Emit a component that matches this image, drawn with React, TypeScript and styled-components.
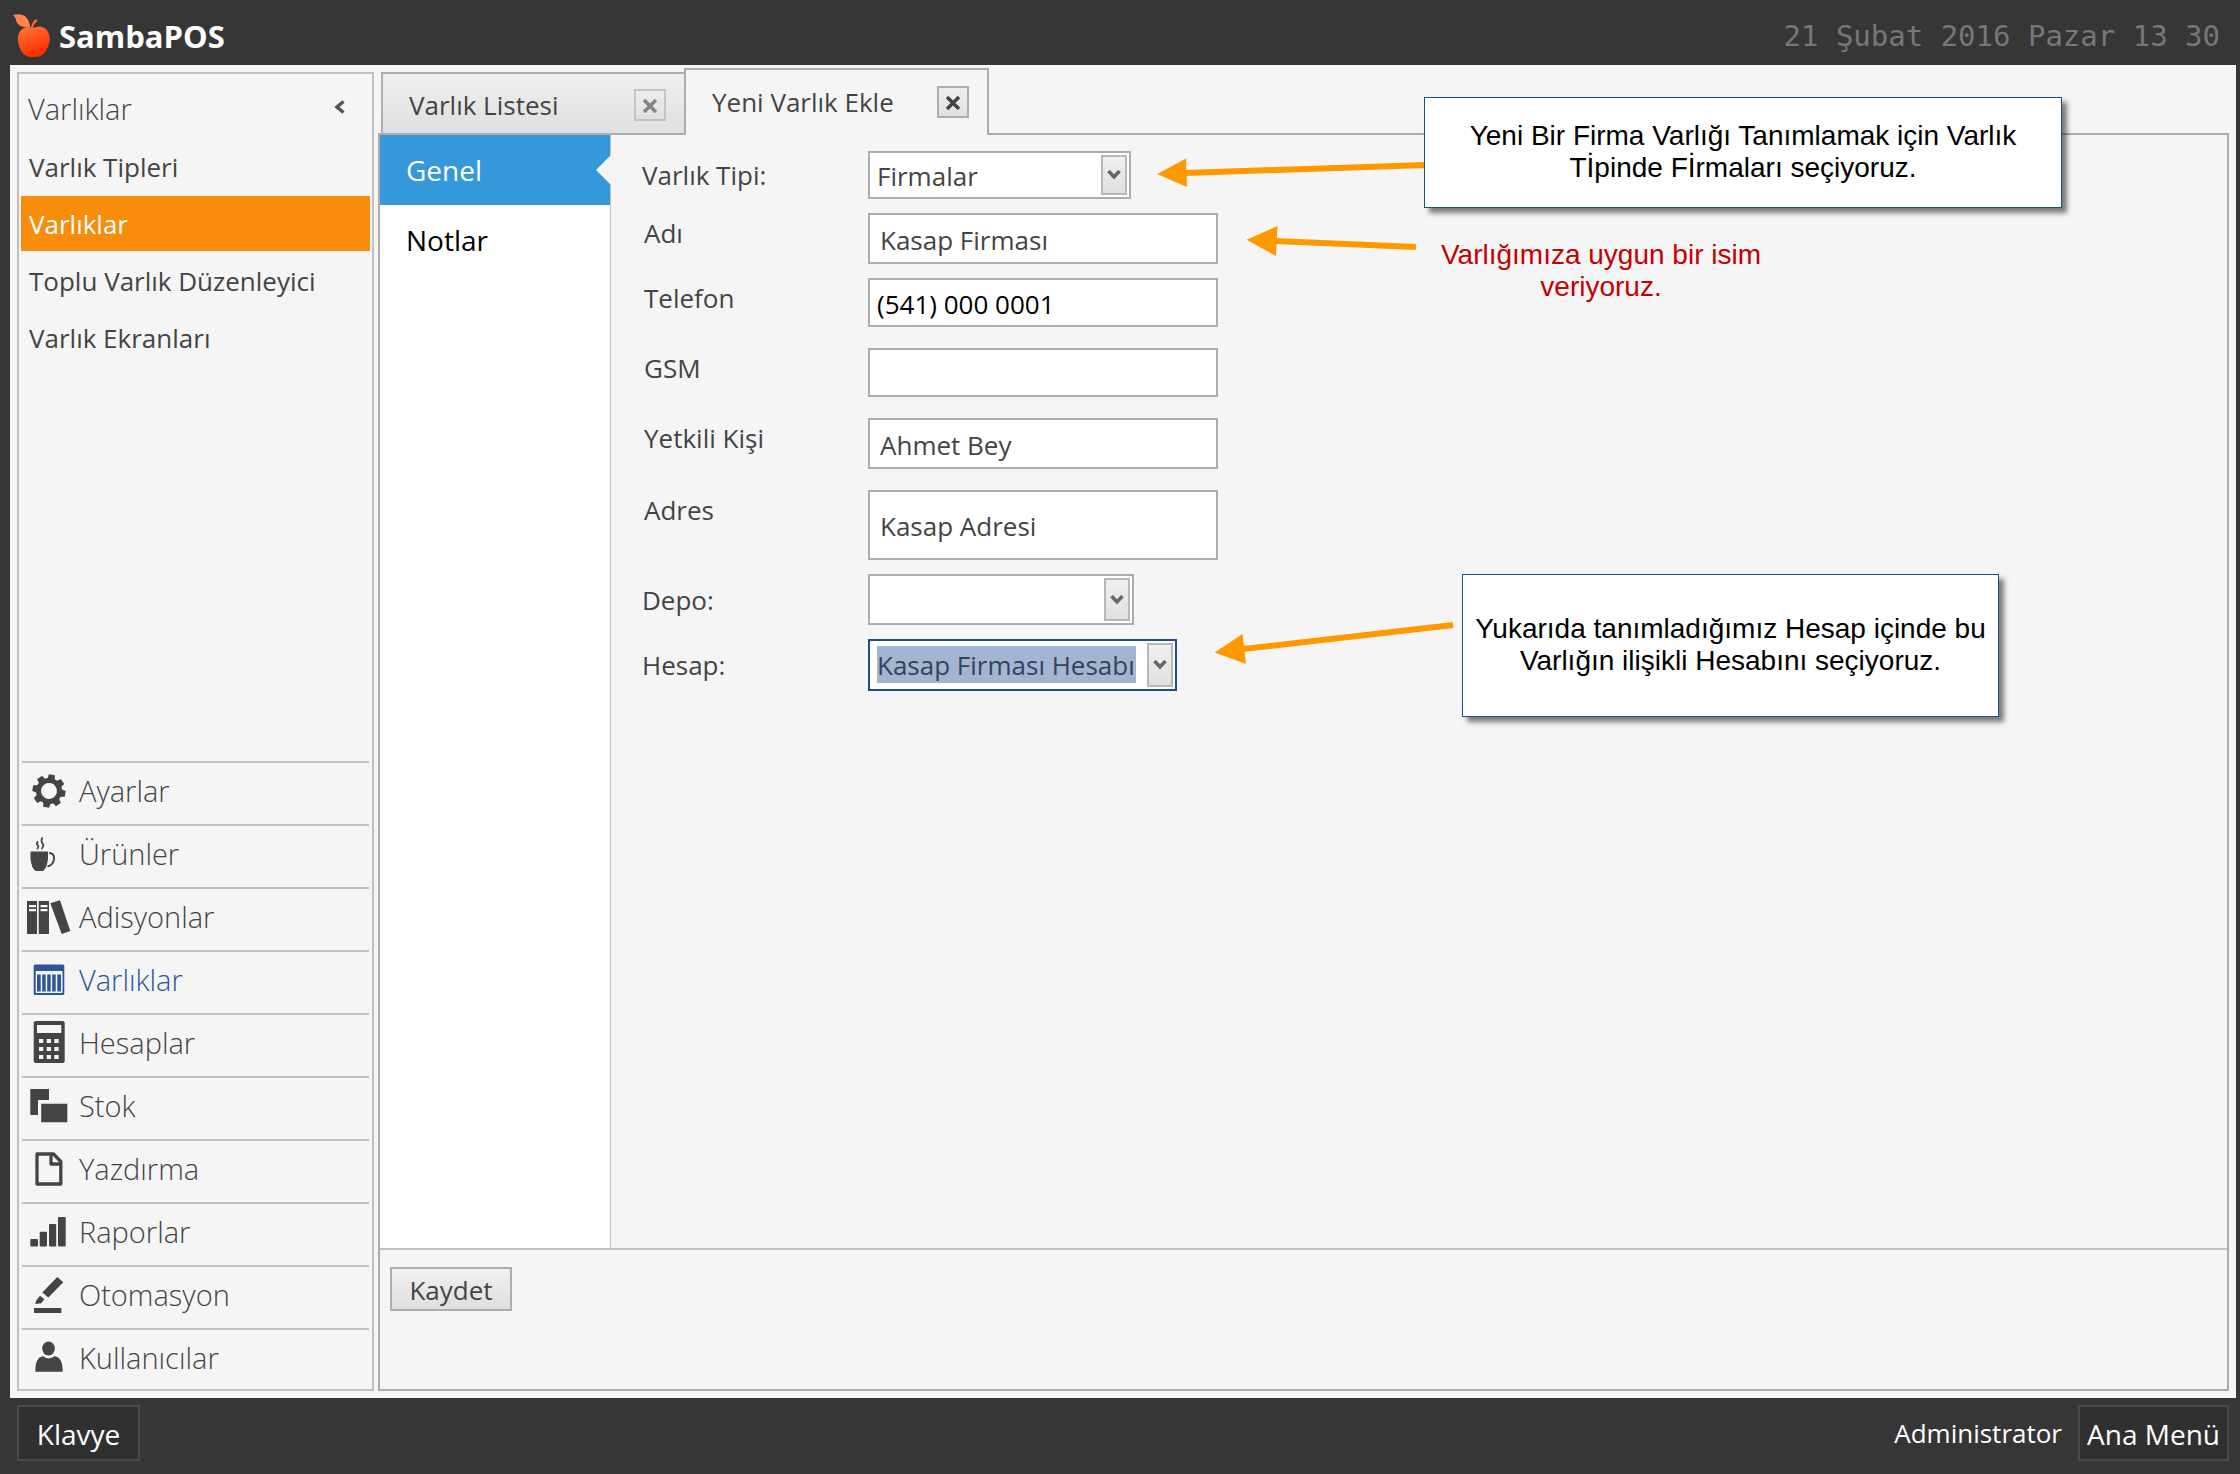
import React, { useState } from "react";
import styled, { createGlobalStyle, css } from "styled-components";

const ui = `"Open Sans", "Noto Sans", sans-serif`;
const line = "#c0c0c0";
const frame = "#adadad";
const ink = "#444444";
const dark = "#363636";
const surface = "#f5f5f5";
const annotation = "#ff9900";

const GlobalStyle = createGlobalStyle`
  *, *::before, *::after { box-sizing: border-box; }
  body { margin: 0; background: ${dark}; font-family: ${ui}; font-size: 26px; line-height: 36px; color: ${ink}; }
  button, input, select { font: inherit; color: inherit; margin: 0; }
  button { cursor: pointer; }
`;

const Shell = styled.div`
  display: flex;
  flex-direction: column;
  min-height: 100vh;
  background: ${dark};
`;

const Header = styled.header`
  display: flex;
  align-items: center;
  justify-content: space-between;
  height: 65px;
  padding: 6px 20px 0 13px;
`;

const Brand = styled.div`
  display: flex;
  align-items: center;
  gap: 8px;
  color: #fff;
  font-size: 31px;
  font-weight: 700;
`;

const Clock = styled.time`
  font-family: "DejaVu Sans Mono", monospace;
  font-size: 29px;
  color: #777;
`;

const Main = styled.main`
  flex: 1;
  display: grid;
  grid-template-columns: 357px minmax(0, 1fr);
  gap: 4px;
  margin: 0 4px 0 10px;
  padding: 3px 7px 7px;
  background: ${surface};
`;

const Sidebar = styled.aside`
  display: flex;
  flex-direction: column;
  justify-content: space-between;
  margin-top: 4px;
  padding: 0 2px;
  border: 2px solid ${line};
`;

const SidebarHead = styled.div`
  display: flex;
  align-items: center;
  justify-content: space-between;
  height: 65px;
  padding: 4px 25px 0 7px;
`;

const SidebarTitle = styled.h2`
  margin: 0;
  font-size: 29px;
  font-weight: 300;
`;

const CollapseButton = styled.button`
  display: flex;
  padding: 0 0 4px;
  border: 0;
  background: none;
`;

const List = styled.ul`
  display: flex;
  flex-direction: column;
  gap: 2px;
  margin: 0;
  padding: 0;
  list-style: none;
`;

const LinkButton = styled.button<{ $active?: boolean }>`
  display: block;
  width: 100%;
  height: 55px;
  padding: 0 8px;
  border: 0;
  text-align: left;
  white-space: nowrap;
  background: ${(p) => (p.$active ? "#f88c0b" : "transparent")};
  color: ${(p) => (p.$active ? "#fff" : ink)};
`;

const ModuleList = styled.ul`
  margin: 0;
  padding: 0 1px;
  list-style: none;
`;

const ModuleButton = styled.button<{ $active?: boolean }>`
  display: flex;
  align-items: flex-start;
  gap: 6px;
  width: 100%;
  height: 61px;
  padding: 7px 0 0 3px;
  border: 0;
  background: none;
  font-size: 29px;
  font-weight: 300;
  line-height: 42px;
  color: ${(p) => (p.$active ? "#2b579a" : ink)};
`;

const ModuleItem = styled.li`
  border-top: 2px solid ${line};

  &:last-child ${ModuleButton} {
    height: 59px;
  }
`;

const ModuleIcon = styled.svg`
  width: 48px;
  height: 48px;
  overflow: visible;
  fill: currentColor;
`;

const Workspace = styled.section`
  position: relative;
  display: flex;
  flex-direction: column;
`;

const TabStrip = styled.div`
  display: flex;
  align-items: flex-end;
  height: 65px;
  padding-left: 3px;
`;

const Tab = styled.div<{ $active?: boolean }>`
  display: flex;
  align-items: center;
  justify-content: space-between;
  border: 2px solid ${frame};
  border-bottom: 0;
  ${(p) =>
    p.$active
      ? css`
          position: relative;
          z-index: 1;
          width: 305px;
          height: 67px;
          margin: 0 0 -2px -2px;
          padding: 0 18px 2px 26px;
          background: ${surface};
        `
      : css`
          width: 305px;
          height: 61px;
          padding: 2px 18px 0 26px;
          background: linear-gradient(#efefef, #e0e0e0);
        `}
`;

const TabLabel = styled.button`
  padding: 0;
  border: 0;
  background: none;
  white-space: nowrap;
`;

const CloseButton = styled.button<{ $muted?: boolean }>`
  display: grid;
  place-items: center;
  width: 32px;
  height: 32px;
  padding: 2px 0 0;
  border: 2px solid ${frame};
  background: linear-gradient(#efefef, #e0e0e0);
  opacity: ${(p) => (p.$muted ? 0.6 : 1)};
`;

const Panel = styled.div`
  flex: 1;
  display: flex;
  flex-direction: column;
  border: 2px solid ${frame};
`;

const PanelBody = styled.div`
  flex: 1;
  display: grid;
  grid-template-columns: 231px minmax(0, 1fr);
`;

const SectionNav = styled.nav`
  border-right: 1px solid ${line};
  background: #fff;
`;

const SectionButton = styled.button<{ $active?: boolean }>`
  display: block;
  position: relative;
  width: 100%;
  height: 70px;
  padding: 0 26px;
  border: 0;
  text-align: left;
  font-size: 28px;
  background: ${(p) => (p.$active ? "#3498db" : "transparent")};
  color: ${(p) => (p.$active ? "#fff" : "#000")};

  ${(p) =>
    p.$active &&
    css`
      &::after {
        content: "";
        position: absolute;
        top: 20px;
        right: -1px;
        width: 15px;
        height: 30px;
        background: ${surface};
        clip-path: polygon(100% 0, 0 50%, 100% 100%);
      }
    `}
`;

const Form = styled.form`
  display: flex;
  flex-direction: column;
  align-items: flex-start;
  gap: 14px;
  padding: 16px 0 0 31px;
`;

const FieldGroup = styled.div`
  display: flex;
  flex-direction: column;
  gap: 21px;
`;

const Field = styled.div<{ $combo?: boolean }>`
  display: grid;
  grid-template-columns: 226px auto;
  align-items: ${(p) => (p.$combo ? "center" : "start")};
`;

const Label = styled.label<{ $combo?: boolean }>`
  padding: ${(p) => (p.$combo ? "0" : "2px 0 0 2px")};
`;

const TextBox = styled.input<{ $height: number; $plain?: boolean }>`
  width: 350px;
  height: ${(p) => p.$height}px;
  padding: ${(p) => (p.$plain ? "2px 7px 0" : "2px 10px 0")};
  border: 2px solid ${frame};
  border-radius: 0;
  outline: 0;
  background: #fff;
  color: ${(p) => (p.$plain ? "#000" : ink)};
`;

const Combo = styled.div<{ $width: number; $height: number; $focused?: boolean }>`
  position: relative;
  width: ${(p) => p.$width}px;
  height: ${(p) => p.$height}px;
  border: 2px solid ${(p) => (p.$focused ? "#1f4e8f" : frame)};
  background: #fff;
`;

const Select = styled.select<{ $focused?: boolean }>`
  display: block;
  width: 100%;
  height: 100%;
  padding: 5px 39px 6px 7px;
  border: 0;
  border-radius: 0;
  outline: 0;
  appearance: none;
  background-color: ${(p) => (p.$focused ? "#a4b5d1" : "#fff")};
  background-clip: content-box;
  color: ${(p) => (p.$focused ? "#34435c" : ink)};
`;

const ComboArrow = styled.span`
  position: absolute;
  top: 2px;
  right: 2px;
  bottom: 2px;
  display: grid;
  place-items: center;
  width: 26px;
  border: 2px solid #b8b8b8;
  background: linear-gradient(#f0f0f0, #e0e0e0);
  pointer-events: none;
`;

const PanelFooter = styled.div`
  height: 141px;
  padding: 17px 10px;
  border-top: 2px solid ${line};
`;

const SaveButton = styled.button`
  height: 44px;
  width: 122px;
  padding: 2px 0 0;
  border: 2px solid ${frame};
  background: linear-gradient(#f1f1f1, #dfdfdf);
`;

const Footer = styled.footer`
  display: flex;
  align-items: center;
  justify-content: space-between;
  height: 76px;
  padding: 0 11px 6px 17px;
  color: #fff;
`;

const UserArea = styled.div`
  display: flex;
  align-items: center;
  gap: 16px;
`;

const FooterButton = styled.button<{ $width: number }>`
  width: ${(p) => p.$width}px;
  height: 56px;
  padding: 2px 0 0;
  border: 2px solid #4a4a4a;
  background: #303030;
  font-size: 28px;
  white-space: nowrap;
`;

const Annotations = styled.div`
  position: absolute;
  inset: 0;
  z-index: 2;
  pointer-events: none;
  font-family: "Liberation Sans", Arial, sans-serif;
  font-size: 28px;
  line-height: 32px;
  text-align: center;
`;

const Arrows = styled.svg`
  position: absolute;
  top: 0;
  left: 0;
  width: 1120px;
  height: 660px;
  fill: ${annotation};
  stroke: ${annotation};
`;

const Note = styled.p<{ $x: number; $y: number; $w: number; $h: number; $boxed?: boolean }>`
  position: absolute;
  left: ${(p) => p.$x}px;
  top: ${(p) => p.$y}px;
  width: ${(p) => p.$w}px;
  height: ${(p) => p.$h}px;
  display: grid;
  place-items: center;
  margin: 0;
  color: #c40000;
  ${(p) =>
    p.$boxed &&
    css`
      padding-bottom: 2px;
      border: 1px solid #1c4f8c;
      background: #fff;
      color: #000;
      box-shadow: 5px 5px 5px rgba(0, 0, 0, 0.5);
    `}
`;

const gearTeeth = [0, 45, 90, 135, 180, 225, 270, 315];

const icons: Record<string, React.ReactNode> = {
  gear: (
    <g transform="rotate(10 24 21)">
      <circle cx="24" cy="21" r="10.5" fill="none" stroke="currentColor" strokeWidth="5" />
      {gearTeeth.map((a) => (
        <path key={a} d="M20.2 9.5 L21 4.5 H27 L27.8 9.5 Z" transform={`rotate(${a} 24 21)`} />
      ))}
    </g>
  ),
  cup: (
    <>
      <path d="M5.5 18.5 H23 V26 Q22 35 18 38 H10.5 Q6.5 35 5.5 26 Z" />
      <path d="M24 20 Q29.500 20 29 26 Q28.500 32 22.500 33.500" fill="none" stroke="currentColor" strokeWidth="2" />
      <path d="M12 16 Q14.500 13.500 12.500 12 Q11 10.500 13 8.500 M16.500 16 Q19.500 12.500 17.500 10.500 Q15.500 8 17.500 4.500" fill="none" stroke="currentColor" strokeWidth="1.8" />
    </>
  ),
  books: (
    <>
      <path fillRule="evenodd" d="M2 5 H12 V38 H2 Z M4 9 V11.300 H11 V9 Z M4 13 V15.200 H11 V13 Z" />
      <path fillRule="evenodd" d="M13.700 5 H24 V38 H13.700 Z M15.500 9 V11.300 H22.500 V9 Z M15.500 13 V15.200 H22.500 V13 Z" />
      <path d="M25.300 7.300 L35 4.300 L45.300 35 L36.700 38 Z" />
    </>
  ),
  calendar: (
    <>
      <path fillRule="evenodd" d="M10 5.500 H38 Q39.300 5.500 39.300 7 V34.500 Q39.300 36 38 36 H10 Q8.700 36 8.700 34.500 V7 Q8.700 5.500 10 5.500 Z M10.700 12 V34 H37.500 V12 Z" />
      <path d="M12 15.500 H15.700 V32.500 H12 Z M17.200 15.500 H20.700 V32.500 H17.200 Z M22.200 15.500 H25.700 V32.500 H22.200 Z M27.200 15.500 H30.700 V32.500 H27.200 Z M32.300 15.500 H36 V32.500 H32.300 Z" />
    </>
  ),
  calculator: (
    <path
      fillRule="evenodd"
      d="M11 -1 H37.500 Q39.700 -1 39.700 1 V39 Q39.700 41 37.500 41 H11 Q8.700 41 8.700 39 V1 Q8.700 -1 11 -1 Z M12 3 V11 H36.300 V3 Z M14 17 V21 H18.300 V17 Z M21.700 17 V21 H26 V17 Z M29.300 17 V21 H33.700 V17 Z M14 25 V29 H18.300 V25 Z M21.700 25 V29 H26 V25 Z M29.300 25 V29 H33.700 V25 Z M14 33 V37 H18.300 V33 Z M21.700 33 V37 H26 V33 Z M29.300 33 V37 H33.700 V33 Z"
    />
  ),
  stock: <path d="M5.300 4 H24 V15 H13 V30 H5.300 Z M16.200 18.700 H42.300 V37.300 H16.200 Z" />,
  page: (
    <path d="M12 6 H28.500 L35.800 13.500 V36 H12 Z M26 6 V16 H35.800" fill="none" stroke="currentColor" strokeWidth="3.300" strokeLinejoin="round" />
  ),
  bars: (
    <>
      <rect x="5.300" y="28" width="7.700" height="7.500" rx="1" />
      <rect x="14.700" y="20.700" width="7.300" height="14.800" rx="1" />
      <rect x="24" y="13" width="7.200" height="22.500" rx="1" />
      <rect x="33" y="6" width="7.700" height="29.500" rx="1" />
    </>
  ),
  pencil: (
    <path d="M9 34 H36.300 V39 H9 Z M32.300 3 L38.300 8.300 L23.300 23.500 L17.300 18.500 Z M15 21.700 L19.300 25.300 L16.300 29.300 L10.300 30 L11 26.700 Z" />
  ),
  user: (
    <>
      <ellipse cx="23.500" cy="11.500" rx="6.300" ry="7" />
      <path d="M10.300 34.700 Q10.300 20 18 19.300 Q23.500 23.500 29.500 19.300 Q37.700 20 37.700 34.700 Z" />
    </>
  ),
};

const links = ["Varlık Tipleri", "Varlıklar", "Toplu Varlık Düzenleyici", "Varlık Ekranları"];

const modules = [
  { name: "Ayarlar", icon: "gear" },
  { name: "Ürünler", icon: "cup" },
  { name: "Adisyonlar", icon: "books" },
  { name: "Varlıklar", icon: "calendar" },
  { name: "Hesaplar", icon: "calculator" },
  { name: "Stok", icon: "stock" },
  { name: "Yazdırma", icon: "page" },
  { name: "Raporlar", icon: "bars" },
  { name: "Otomasyon", icon: "pencil" },
  { name: "Kullanıcılar", icon: "user" },
];

function AppleLogo() {
  return (
    <svg width="38" height="44" viewBox="0 0 38 44" aria-hidden="true">
      <defs>
        <linearGradient id="apple" x1="0" y1="0" x2="0.4" y2="1">
          <stop offset="0" stopColor="#ff7a3c" />
          <stop offset="1" stopColor="#ff2e00" />
        </linearGradient>
      </defs>
      <path d="M0 1 Q9 -1 13 3 Q17 8 17 13 Q9 14 5 10 Q3 8 2.500 4 Z" fill="#ff8548" />
      <path d="M18 14 Q19 7 23.500 5 L24.500 7 Q20.500 10 20 14 Z" fill="#ff6a35" />
      <path d="M20 14 Q28 10 34 16 Q39 24 35 33 Q31 43 22 43 H18 Q9 42 6 32 Q3 22 8 16 Q13 11 20 14 Z" fill="url(#apple)" />
    </svg>
  );
}

function Cross() {
  return (
    <svg width="16" height="14" viewBox="0 0 16 14" aria-hidden="true">
      <path d="M2 1 L14 13 M14 1 L2 13" stroke="#444" strokeWidth="3.500" />
    </svg>
  );
}

function ChevronDown() {
  return (
    <svg width="14" height="10" viewBox="0 0 14 10" aria-hidden="true">
      <path d="M1.500 1 L7 7 L12.500 1" fill="none" stroke="#666" strokeWidth="3.500" />
    </svg>
  );
}

function TextField({ id, label, value = "", height, plain }: { id: string; label: string; value?: string; height: number; plain?: boolean }) {
  return (
    <Field>
      <Label htmlFor={id}>{label}</Label>
      <TextBox id={id} type="text" defaultValue={value} $height={height} $plain={plain} />
    </Field>
  );
}

function ComboField({ id, label, value, width, height, focused }: { id: string; label: string; value: string; width: number; height: number; focused?: boolean }) {
  return (
    <Field $combo>
      <Label $combo htmlFor={id}>{label}</Label>
      <Combo $width={width} $height={height} $focused={focused}>
        <Select id={id} defaultValue={value} $focused={focused}>
          <option value={value}>{value}</option>
        </Select>
        <ComboArrow><ChevronDown /></ComboArrow>
      </Combo>
    </Field>
  );
}

export default function App() {
  const [link, setLink] = useState("Varlıklar");
  const [section, setSection] = useState("Genel");

  return (
    <Shell>
      <GlobalStyle />
      <Header>
        <Brand>
          <AppleLogo />
          SambaPOS
        </Brand>
        <Clock dateTime="2016-02-21T13:30">21 Şubat 2016 Pazar 13 30</Clock>
      </Header>

      <Main>
        <Sidebar>
          <div>
            <SidebarHead>
              <SidebarTitle>Varlıklar</SidebarTitle>
              <CollapseButton aria-label="Daralt">
                <svg width="11" height="14" viewBox="0 0 11 14" aria-hidden="true">
                  <path d="M9.500 1.500 L3 7 L9.500 12.500" fill="none" stroke="#555" strokeWidth="3.500" />
                </svg>
              </CollapseButton>
            </SidebarHead>
            <List>
              {links.map((name) => (
                <li key={name}>
                  <LinkButton $active={name === link} onClick={() => setLink(name)}>{name}</LinkButton>
                </li>
              ))}
            </List>
          </div>
          <ModuleList>
            {modules.map((m) => (
              <ModuleItem key={m.name}>
                <ModuleButton $active={m.name === "Varlıklar"}>
                  <ModuleIcon viewBox="0 0 48 48" aria-hidden="true">{icons[m.icon]}</ModuleIcon>
                  {m.name}
                </ModuleButton>
              </ModuleItem>
            ))}
          </ModuleList>
        </Sidebar>

        <Workspace>
          <TabStrip>
            <Tab>
              <TabLabel>Varlık Listesi</TabLabel>
              <CloseButton $muted aria-label="Kapat"><Cross /></CloseButton>
            </Tab>
            <Tab $active>
              <TabLabel>Yeni Varlık Ekle</TabLabel>
              <CloseButton aria-label="Kapat"><Cross /></CloseButton>
            </Tab>
          </TabStrip>

          <Panel>
            <PanelBody>
              <SectionNav>
                {["Genel", "Notlar"].map((name) => (
                  <SectionButton key={name} $active={name === section} onClick={() => setSection(name)}>{name}</SectionButton>
                ))}
              </SectionNav>
              <Form id="entity" onSubmit={(e) => e.preventDefault()}>
                <ComboField id="type" label="Varlık Tipi:" value="Firmalar" width={263} height={48} />
                <TextField id="name" label="Adı" value="Kasap Firması" height={51} />
                <FieldGroup>
                  <TextField id="phone" label="Telefon" value="(541) 000 0001" height={49} plain />
                  <TextField id="gsm" label="GSM" height={49} />
                  <TextField id="contact" label="Yetkili Kişi" value="Ahmet Bey" height={51} />
                  <TextField id="address" label="Adres" value="Kasap Adresi" height={70} />
                </FieldGroup>
                <ComboField id="store" label="Depo:" value="" width={266} height={51} />
                <ComboField id="account" label="Hesap:" value="Kasap Firması Hesabı" width={309} height={52} focused />
              </Form>
            </PanelBody>
            <PanelFooter>
              <SaveButton type="submit" form="entity">Kaydet</SaveButton>
            </PanelFooter>
          </Panel>

          <Annotations>
            <Arrows viewBox="378 68 1120 660" aria-hidden="true">
              <path d="M1185 173 L1425 165" strokeWidth="6" />
              <path d="M1157 174 L1186 158.500 L1187 187 Z" stroke="none" />
              <path d="M1275 241 L1416 247" strokeWidth="6" />
              <path d="M1246.500 239.700 L1277.500 226 L1276 256 Z" stroke="none" />
              <path d="M1243 649 L1453 625" strokeWidth="6" />
              <path d="M1214.500 652.500 L1242.500 634 L1246 664 Z" stroke="none" />
            </Arrows>
            <Note $boxed $x={1046} $y={29} $w={638} $h={111}>
              <span>Yeni Bir Firma Varlığı Tanımlamak için Varlık<br />Tİpinde Fİrmaları seçiyoruz.</span>
            </Note>
            <Note $x={1046} $y={171} $w={354} $h={64}>
              <span>Varlığımıza uygun bir isim<br />veriyoruz.</span>
            </Note>
            <Note $boxed $x={1084} $y={506} $w={537} $h={143}>
              <span>Yukarıda tanımladığımız Hesap içinde bu<br />Varlığın ilişikli Hesabını seçiyoruz.</span>
            </Note>
          </Annotations>
        </Workspace>
      </Main>

      <Footer>
        <FooterButton $width={123}>Klavye</FooterButton>
        <UserArea>
          <span>Administrator</span>
          <FooterButton $width={151}>Ana Menü</FooterButton>
        </UserArea>
      </Footer>
    </Shell>
  );
}
